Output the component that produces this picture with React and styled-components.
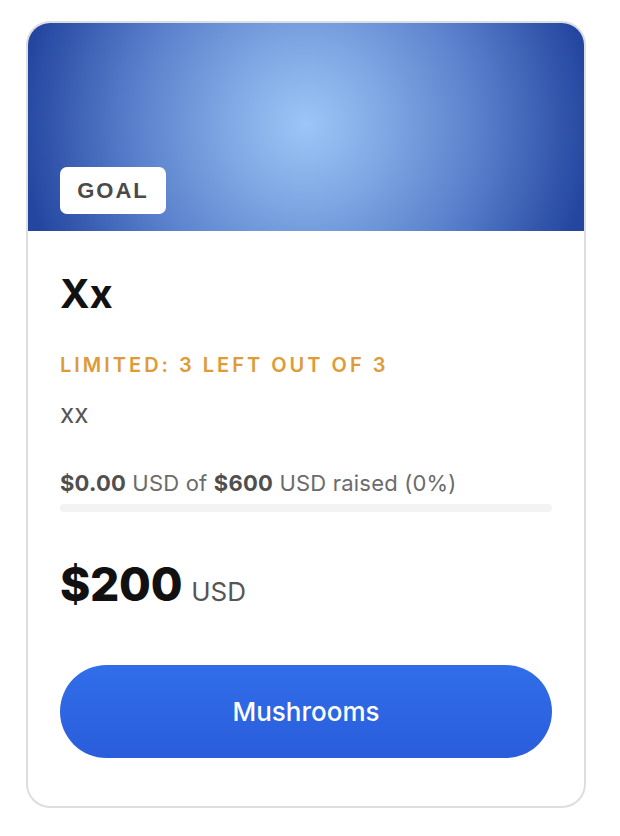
import React from "react";
import styled, { createGlobalStyle } from "styled-components";

const GlobalStyle = createGlobalStyle`
  body {
    margin: 0;
    background: #ffffff;
    font-family: Inter, "Noto Sans", sans-serif;
  }
`;

const Page = styled.div`
  padding: 21px 0 0 26px;
`;

const Card = styled.div`
  width: 560px;
  box-sizing: border-box;
  border: 2px solid #dedede;
  border-radius: 24px;
  overflow: hidden;
  background: #fff;
`;

const Banner = styled.div`
  height: 208px;
  display: flex;
  align-items: flex-end;
  padding: 0 32px 17px;
  box-sizing: border-box;
  background: radial-gradient(
    circle at 50% 49%,
    #9cc6f8 0%,
    #7ea6e2 28%,
    #5a80cc 58%,
    #2446a0 96%
  );
`;

const Badge = styled.span`
  display: inline-flex;
  align-items: center;
  justify-content: center;
  width: 106px;
  height: 47px;
  box-sizing: border-box;
  background: #fff;
  border-radius: 7px;
  font-family: "Liberation Sans", Arial, sans-serif;
  font-weight: 700;
  font-size: 22px;
  letter-spacing: 2px;
  color: #4a4a4a;
`;

const Body = styled.div`
  padding: 39px 32px 48px;
  display: flex;
  flex-direction: column;
`;

const Title = styled.h2`
  margin: 0;
  font-size: 40px;
  line-height: 48px;
  font-weight: 700;
  color: #111;
`;

const Limit = styled.div`
  margin-top: 35px;
  font-size: 20px;
  line-height: 24px;
  font-weight: 600;
  letter-spacing: 3px;
  color: #de9b37;
`;

const Desc = styled.p`
  margin: 21px 0 0;
  font-size: 26px;
  line-height: 32px;
  color: #555;
`;

const Raised = styled.div`
  margin-top: 40px;
  font-size: 22px;
  line-height: 26px;
  letter-spacing: 0.2px;
  color: #6b6b6b;

  b {
    font-weight: 700;
    color: #4f4f4f;
  }
`;

const Track = styled.div`
  margin-top: 8px;
  height: 8px;
  border-radius: 4px;
  background: #f3f3f3;
  overflow: hidden;
`;

const Fill = styled.div`
  height: 100%;
  background: #2e6be6;
`;

const Price = styled.div`
  margin-top: 46px;
  display: flex;
  align-items: baseline;
  gap: 9px;
  line-height: 52px;
`;

const Amount = styled.span`
  font-size: 46px;
  font-weight: 800;
  letter-spacing: -0.3px;
  color: #111;
`;

const Currency = styled.span`
  font-size: 26px;
  color: #555;
`;

const Action = styled.button`
  margin-top: 47px;
  height: 93px;
  border: none;
  border-radius: 47px;
  background: linear-gradient(180deg, #316ee9 0%, #2a5ddb 100%);
  color: #fff;
  font-family: Inter, "Noto Sans", sans-serif;
  font-size: 26px;
  font-weight: 500;
  cursor: pointer;
`;

const raised = 0;
const goal = 600;

export default function App() {
  const pct = Math.round((raised / goal) * 100);
  return (
    <>
      <GlobalStyle />
      <Page>
        <Card>
          <Banner>
            <Badge>GOAL</Badge>
          </Banner>
          <Body>
            <Title>Xx</Title>
            <Limit>LIMITED: 3 LEFT OUT OF 3</Limit>
            <Desc>xx</Desc>
            <Raised>
              <b>${raised.toFixed(2)}</b> USD of <b>${goal}</b> USD raised ({pct}%)
            </Raised>
            <Track>
              <Fill style={{ width: `${pct}%` }} />
            </Track>
            <Price>
              <Amount>$200</Amount>
              <Currency>USD</Currency>
            </Price>
            <Action>Mushrooms</Action>
          </Body>
        </Card>
      </Page>
    </>
  );
}
